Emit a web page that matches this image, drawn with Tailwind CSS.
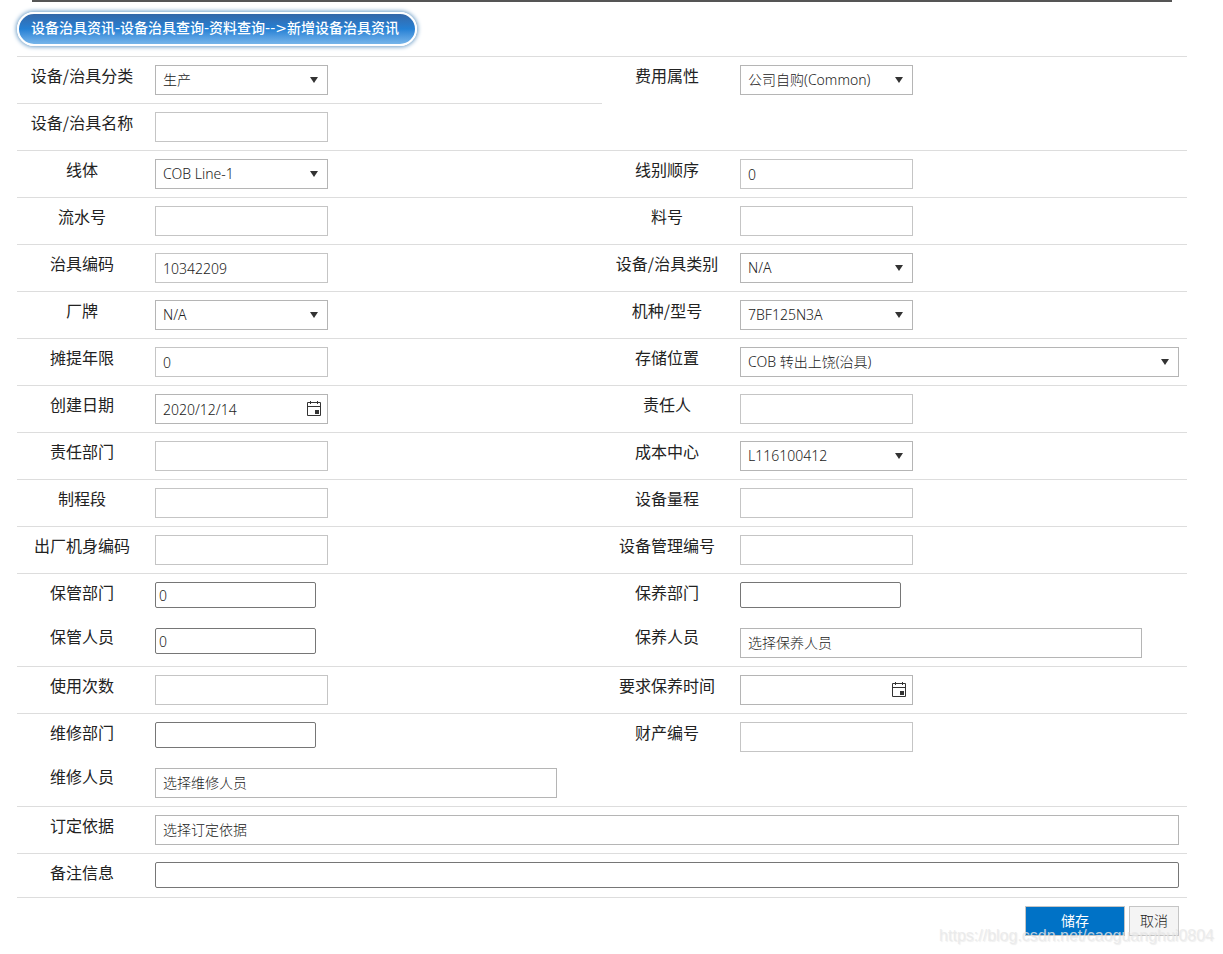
<!DOCTYPE html>
<html lang="zh-CN">
<head>
<meta charset="utf-8">
<meta name="viewport" content="width=device-width, initial-scale=1">
<title>新增设备治具资讯</title>
<script src="https://cdn.jsdelivr.net/npm/@tailwindcss/browser@4"></script>
</head>
<body class="bg-white font-['Noto_Sans','Noto_Sans_CJK_SC',sans-serif] text-[#222]">
<svg class="hidden" aria-hidden="true">
  <symbol id="arrow" viewBox="0 0 10 8"><path d="M1 1h8L5 7z" fill="#333"/></symbol>
  <symbol id="calendar" viewBox="0 0 16 16"><path d="M1.5 2.5h13v13h-13zM1.5 6.5h13" fill="none" stroke="#333"/><path d="M4 1h1v3H4zM11 1h1v3h-1zM3 2h3v1H3zM10 2h3v1h-3zM9 10h4v4H9z" fill="#333"/></symbol>
</svg>
<main class="relative pb-4">
  <div class="ml-8 mr-[51px] h-0.5 bg-[#555]"></div>
  <h1 class="ml-[17px] mt-2.5 flex h-[34px] w-fit items-center whitespace-nowrap rounded-full border-2 border-white bg-linear-to-b from-[#3468a8] via-[#2380d4] to-[#75b5ea] pb-0.5 pl-3 pr-4 font-['DejaVu_Sans','Noto_Sans_CJK_SC',sans-serif] text-sm font-medium text-white shadow-[0_0_4px_1px_#6f9fc8]">设备治具资讯-设备治具查询-资料查询--&gt;新增设备治具资讯</h1>

  <form class="ml-[17px] mr-9 mt-2.5 text-sm
    [&_label]:w-[130px] [&_label]:shrink-0 [&_label]:pt-1.5 [&_label]:text-center [&_label]:font-['Noto_Sans_CJK_SC',sans-serif] [&_label]:text-base [&_label]:leading-6
    [&_section]:grid [&_section]:grid-cols-2 [&_section]:border-t [&_section]:border-[#ddd]
    [&_section>div]:flex [&_section>div]:min-h-[46px]
    [&_p]:relative [&_p]:m-2 [&_p]:h-[30px] [&_p]:w-[173px]
    [&_p>input]:h-full [&_p>input]:w-full [&_p>input]:border [&_p>input]:border-[#c5c5c5] [&_p>input]:px-[7px] [&_p>input]:font-light
    [&_select]:h-full [&_select]:w-full [&_select]:appearance-none [&_select]:border [&_select]:border-[#b5b5b5] [&_select]:bg-white [&_select]:px-[7px] [&_select]:font-light
    [&_p>svg]:pointer-events-none [&_p>svg]:absolute [&_p>svg]:right-[9px] [&_p>svg]:top-[11px] [&_p>svg]:h-2 [&_p>svg]:w-2.5
    [&_p>button]:absolute [&_p>button]:right-1.5 [&_p>button]:top-1.5
    [&_input]:placeholder:text-[#222]">

    <section>
      <div><label for="category">设备/治具分类</label><p><select id="category"><option>生产</option></select><svg><use href="#arrow"/></svg></p></div>
      <div><label for="cost">费用属性</label><p><select id="cost"><option>公司自购(Common)</option></select><svg><use href="#arrow"/></svg></p></div>
      <div class="border-t border-[#ddd]"><label for="name">设备/治具名称</label><p><input id="name" type="text"></p></div>
    </section>
    <section>
      <div><label for="line">线体</label><p><select id="line"><option>COB Line-1</option></select><svg><use href="#arrow"/></svg></p></div>
      <div><label for="order">线别顺序</label><p><input id="order" type="text" value="0"></p></div>
    </section>
    <section>
      <div><label for="serial">流水号</label><p><input id="serial" type="text"></p></div>
      <div><label for="part">料号</label><p><input id="part" type="text"></p></div>
    </section>
    <section>
      <div><label for="code">治具编码</label><p><input id="code" type="text" value="10342209"></p></div>
      <div><label for="kind">设备/治具类别</label><p><select id="kind"><option>N/A</option></select><svg><use href="#arrow"/></svg></p></div>
    </section>
    <section>
      <div><label for="brand">厂牌</label><p><select id="brand"><option>N/A</option></select><svg><use href="#arrow"/></svg></p></div>
      <div><label for="model">机种/型号</label><p><select id="model"><option>7BF125N3A</option></select><svg><use href="#arrow"/></svg></p></div>
    </section>
    <section>
      <div><label for="years">摊提年限</label><p><input id="years" type="text" value="0"></p></div>
      <div><label for="location">存储位置</label><p class="!w-auto grow"><select id="location"><option>COB 转出上饶(治具)</option></select><svg><use href="#arrow"/></svg></p></div>
    </section>
    <section>
      <div><label for="created">创建日期</label><p><input id="created" type="text" value="2020/12/14" class="!border-[#b5b5b5]"><button type="button" aria-label="选择创建日期"><svg class="size-4"><use href="#calendar"/></svg></button></p></div>
      <div><label for="owner">责任人</label><p><input id="owner" type="text"></p></div>
    </section>
    <section>
      <div><label for="dept">责任部门</label><p><input id="dept" type="text"></p></div>
      <div><label for="center">成本中心</label><p><select id="center"><option>L116100412</option></select><svg><use href="#arrow"/></svg></p></div>
    </section>
    <section>
      <div><label for="stage">制程段</label><p><input id="stage" type="text"></p></div>
      <div><label for="range">设备量程</label><p><input id="range" type="text"></p></div>
    </section>
    <section>
      <div><label for="body">出厂机身编码</label><p><input id="body" type="text"></p></div>
      <div><label for="manage">设备管理编号</label><p><input id="manage" type="text"></p></div>
    </section>
    <section>
      <div><label for="keepdept">保管部门</label><input id="keepdept" type="text" value="0" class="m-2 h-[26px] w-[161px] rounded-xs border border-[#767676] px-[3px] font-light"></div>
      <div><label for="maintdept">保养部门</label><input id="maintdept" type="text" class="m-2 h-[26px] w-[161px] rounded-xs border border-[#767676] px-[3px] font-light"></div>
      <div><label for="keeper" class="!pt-1">保管人员</label><input id="keeper" type="text" value="0" class="m-2 h-[26px] w-[161px] rounded-xs border border-[#767676] px-[3px] font-light"></div>
      <div><label for="maintainer" class="!pt-1">保养人员</label><p class="!w-[402px]"><input id="maintainer" type="text" placeholder="选择保养人员" class="!border-[#b5b5b5] pb-0.5"></p></div>
    </section>
    <section>
      <div><label for="uses">使用次数</label><p><input id="uses" type="text"></p></div>
      <div><label for="mainttime">要求保养时间</label><p><input id="mainttime" type="text" class="!border-[#b5b5b5]"><button type="button" aria-label="选择保养时间"><svg class="size-4"><use href="#calendar"/></svg></button></p></div>
    </section>
    <section>
      <div><label for="repairdept">维修部门</label><input id="repairdept" type="text" class="m-2 h-[26px] w-[161px] rounded-xs border border-[#767676] px-[3px] font-light"></div>
      <div><label for="asset">财产编号</label><p><input id="asset" type="text"></p></div>
      <div><label for="repairer" class="!pt-1">维修人员</label><p class="!w-[402px]"><input id="repairer" type="text" placeholder="选择维修人员" class="!border-[#b5b5b5] pb-0.5"></p></div>
    </section>
    <section>
      <div class="col-span-2"><label for="basis">订定依据</label><p class="!w-auto grow"><input id="basis" type="text" placeholder="选择订定依据" class="!border-[#b5b5b5] pb-0.5"></p></div>
    </section>
    <section class="border-b">
      <div class="col-span-2 !min-h-[43px]"><label for="note">备注信息</label><input id="note" type="text" class="m-2 h-[26px] grow rounded-xs border border-[#767676] px-[3px] font-light"></div>
    </section>
    <div class="flex justify-end gap-1 px-2 pt-2">
      <button type="submit" class="h-[30px] w-[100px] border border-[#c5c5c5] bg-[#0072c6] text-white">储存</button>
      <button type="button" class="h-[30px] w-[50px] border border-[#c5c5c5] bg-[#f4f4f4] font-light">取消</button>
    </div>
  </form>
  <div class="pointer-events-none absolute bottom-1 right-[9px] font-['Liberation_Sans',sans-serif] text-base text-[#e8e8e8]/80 [text-shadow:1px_1px_1px_#aaaaaa33]">https://blog.csdn.net/caoguanghui0804</div>
</main>
</body>
</html>
